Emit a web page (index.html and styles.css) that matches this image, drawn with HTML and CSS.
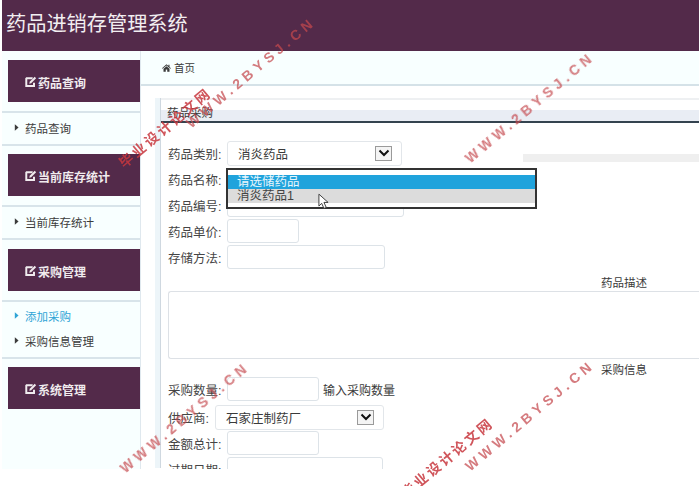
FILE: index.html
```html
<!DOCTYPE html>
<html lang="zh">
<head>
<meta charset="utf-8">
<title>药品进销存管理系统</title>
<link rel="stylesheet" href="styles.css">
</head>
<body>
<svg class="defs" width="0" height="0">
  <symbol id="edit" viewBox="0 0 14 14"><path d="M10 8v3.2H2V3.2h6.5M1 2.2h8M1 2.2v10h10V8" fill="none" stroke="currentColor" stroke-width="1.3"/><path d="M5.5 6.7 11.3 1 13 2.7 7.2 8.4 5 9z" fill="currentColor"/></symbol>
  <symbol id="caret" viewBox="0 0 6 8"><path d="M1 0l4.500 4L1 8z" fill="currentColor"/></symbol>
  <symbol id="chev" viewBox="0 0 12 8"><path d="M1.500 1.500 6 6l4.500-4.500" fill="none" stroke="#111" stroke-width="2"/></symbol>
</svg>
<div class="app">
  <header class="topbar"><h1>药品进销存管理系统</h1></header>
  <div class="layout">
    <aside class="sidebar">
      <section class="group tight">
        <div class="tile"><svg class="ico"><use href="#edit"/></svg>药品查询</div>
        <ul class="links"><li><svg class="tri"><use href="#caret"/></svg>药品查询</li></ul>
      </section>
      <section class="group">
        <div class="tile"><svg class="ico"><use href="#edit"/></svg>当前库存统计</div>
        <ul class="links"><li><svg class="tri"><use href="#caret"/></svg>当前库存统计</li></ul>
      </section>
      <section class="group tight">
        <div class="tile"><svg class="ico"><use href="#edit"/></svg>采购管理</div>
        <ul class="links open">
          <li class="active"><svg class="tri"><use href="#caret"/></svg>添加采购</li>
          <li><svg class="tri"><use href="#caret"/></svg>采购信息管理</li>
        </ul>
      </section>
      <section class="group last">
        <div class="tile"><svg class="ico"><use href="#edit"/></svg>系统管理</div>
      </section>
    </aside>
    <main class="main">
      <nav class="crumb"><svg class="home" viewBox="0 0 12 10"><path d="M6 0 0 5.200l.7.800L6 1.500 11.300 6l.7-.8-2-1.700V.8H8.500v1.400zM2 6v4h3V7h2v3h3V6L6 2.500z" fill="#3a3a3a"/></svg>首页</nav>
      <div class="panel">
        <div class="panel-title">药品采购</div>
        <form class="form">
          <div class="row"><label>药品类别:</label><div class="sel sel-a"><span>消炎药品</span><i class="arrow"><svg width="12" height="8"><use href="#chev"/></svg></i></div></div>
          <div class="row"><label>药品名称:</label></div>
          <div class="row"><label>药品编号:</label><input class="in w177"></div>
          <div class="row"><label>药品单价:</label><input class="in w72"></div>
          <div class="row"><label>存储方法:</label><input class="in w158"></div>
          <div class="caption cap1">药品描述</div>
          <textarea class="area"></textarea>
          <div class="caption cap2">采购信息</div>
          <div class="row row-gap"><label>采购数量:</label><input class="in w92"><span class="hint">输入采购数量</span></div>
          <div class="row"><label class="short">供应商:</label><div class="sel sel-b"><span>石家庄制药厂</span><i class="arrow"><svg width="12" height="8"><use href="#chev"/></svg></i></div></div>
          <div class="row"><label>金额总计:</label><input class="in w92"></div>
          <div class="row"><label>过期日期:</label><input class="in w156"></div>
          <div class="popup">
            <div class="opt opt-on">请选储药品</div>
            <div class="opt opt-hover">消炎药品1</div>
          </div>
        </form>
      </div>
    </main>
  </div>
  <svg class="cursor" viewBox="0 0 12 18"><path d="M1 1v13l3-3 2.500 5.500 2.500-1L6.500 10H11z" fill="#fff" stroke="#333" stroke-width="1"/></svg>
</div>
<div class="ghost"></div>
<span class="mark m1">WWW.2BYSJ.CN</span>
<span class="mark m2">WWW.2BYSJ.CN</span>
<span class="mark m3">WWW.2BYSJ.CN</span>
<span class="mark m4">WWW.2BYSJ.CN</span>
<span class="mark cn c1">毕业设计论文网</span>
<span class="mark cn c2">毕业设计论文网</span>
</body>
</html>
```

FILE: styles.css
```css
* { box-sizing: border-box; }
html, body { margin: 0; height: 100%; }
body {
  position: relative;
  width: 699px;
  height: 486px;
  overflow: hidden;
  background: #fff;
  color: #3a3a3a;
  font: 12px "Liberation Sans", "Noto Sans CJK SC", sans-serif;
  filter: blur(0.35px);
}
.defs { position: absolute; }
.app {
  position: relative;
  height: 469px;
  margin-left: 2px;
  overflow: hidden;
}
.topbar {
  height: 51px;
  padding: 9px 0 0 4px;
  background: #532a4a;
}
.topbar h1 {
  margin: 0;
  color: #f2eef1;
  font-size: 20.200px;
  font-weight: 400;
  line-height: 30px;
}
.layout { display: flex; height: 418px; }
.sidebar {
  flex: none;
  width: 139px;
  padding-top: 9px;
  background: #f8ffff;
  border-right: 1px solid #dfe8ee;
}
.group { margin-bottom: 9px; }
.group.tight { margin-bottom: 8px; }
.tile {
  display: flex;
  align-items: center;
  height: 42px;
  margin-left: 6px;
  padding: 2px 0 0 17px;
  background: #532a4a;
  color: #f0ebee;
  font-size: 12px;
  font-weight: 700;
}
.ico { width: 12px; height: 12px; margin-right: 1px; }
.links {
  margin: 9px 0 0;
  padding: 7px 0 9px;
  list-style: none;
  border-top: 2px solid #d8e4ea;
  border-bottom: 2px solid #d8e4ea;
}
.links li {
  display: flex;
  align-items: center;
  height: 15px;
  padding-left: 12px;
  color: #3c3c3c;
  font-size: 11.500px;
}
.links.open { padding: 1px 0 4px; }
.links.open li { height: 25px; }
.links .active { color: #2fa4d6; }
.tri { width: 5px; height: 7px; margin-right: 6px; }
.main { flex: 1; min-width: 0; background: #fff; }
.crumb {
  display: flex;
  align-items: center;
  height: 35px;
  padding-left: 21px;
  background: #f8ffff;
  border-bottom: 2px solid #d5e2e8;
  font-size: 10.500px;
}
.home { width: 9px; height: 8px; margin-right: 3px; }
.panel {
  height: 370px;
  margin: 12px 0 0 14px;
  padding-left: 5px;
  background: #fff;
  border-left: 5px solid #edf5f9;
  position: relative;
}
.panel::before {
  content: "";
  position: absolute;
  left: 0;
  top: 0;
  bottom: 0;
  width: 1px;
  background: #cfd8e0;
}
.panel-title {
  height: 25px;
  margin-left: -5px;
  padding: 4px 0 0 7px;
  border-top: 2px solid #eef0f2;
  border-bottom: 2px solid #34434f;
  background: linear-gradient(#fff 0 10px, #e9edf4 10px);
  font-size: 11.500px;
}
.form { position: relative; padding: 17px 0 0 3px; }
.row { display: flex; align-items: center; height: 26px; }
.row-gap { margin-bottom: 2px; }
.row label { flex: none; width: 59px; font-size: 12.500px; color: #454545; }
.row label.short { width: 47px; }
.in {
  height: 24px;
  padding: 0;
  background: #fff;
  border: 1px solid #dde3e8;
  border-radius: 3px;
}
.w177 { width: 177px; }
.w72 { width: 72px; }
.w158 { width: 158px; }
.w92 { width: 92px; }
.w156 { width: 156px; }
.hint { margin-left: 4px; font-size: 12px; }
.sel {
  display: flex;
  align-items: center;
  justify-content: space-between;
  height: 25px;
  padding: 0 9px 0 10px;
  background: #fff;
  border: 1px solid #e2e6ea;
  border-radius: 3px;
  font-size: 12.500px;
}
.sel-a { width: 175px; }
.sel-b { width: 169px; padding-left: 10px; }
.arrow {
  display: flex;
  align-items: center;
  justify-content: center;
  width: 17px;
  height: 15px;
  background: #f4f4f4;
  border: 1px solid #9a9a9a;
}
.caption {
  width: 100%;
  padding-left: 433px;
  font-size: 11.500px;
  line-height: 14px;
}
.cap1 { margin-top: 6px; }
.cap2 { margin-top: 4px; margin-bottom: -1px; }
.area {
  display: block;
  width: 100%;
  height: 68px;
  margin: 1px 0 4px;
  background: #fff;
  border: 1px solid #dde1e6;
  border-right: 0;
  border-radius: 3px 0 0 3px;
  resize: none;
}
.popup {
  position: absolute;
  left: 61px;
  top: 45px;
  width: 311px;
  height: 41px;
  padding-top: 5px;
  background: #fff;
  border: 2px solid #333;
  font-size: 12.500px;
  line-height: 14px;
}
.opt { height: 14px; padding-left: 9px; }
.opt-on { background: #20a3dc; color: #e8f6fc; }
.opt-hover { background: #dcdcdc; color: #444; }
.cursor {
  position: absolute;
  left: 316px;
  top: 193px;
  width: 11px;
  height: 17px;
}
.ghost {
  position: absolute;
  left: 523px;
  top: 154px;
  width: 176px;
  height: 8px;
  background: #efefef;
}
.mark {
  position: absolute;
  transform: rotate(-40deg);
  transform-origin: 0 50%;
  color: #c5494e;
  opacity: 0.72;
  font-size: 14px;
  font-weight: 700;
  letter-spacing: 4.400px;
  line-height: 18px;
  white-space: nowrap;
}
.m1 { left: 188px; top: 116px; }
.m2 { left: 467px; top: 151px; }
.m3 { left: 122px; top: 461px; }
.m4 { left: 467px; top: 459px; }
.cn { font-size: 14px; letter-spacing: 2.500px; color: #c8383f; opacity: 0.85; }
.c1 { left: 121px; top: 156px; }
.c2 { left: 403px; top: 486px; }
```
